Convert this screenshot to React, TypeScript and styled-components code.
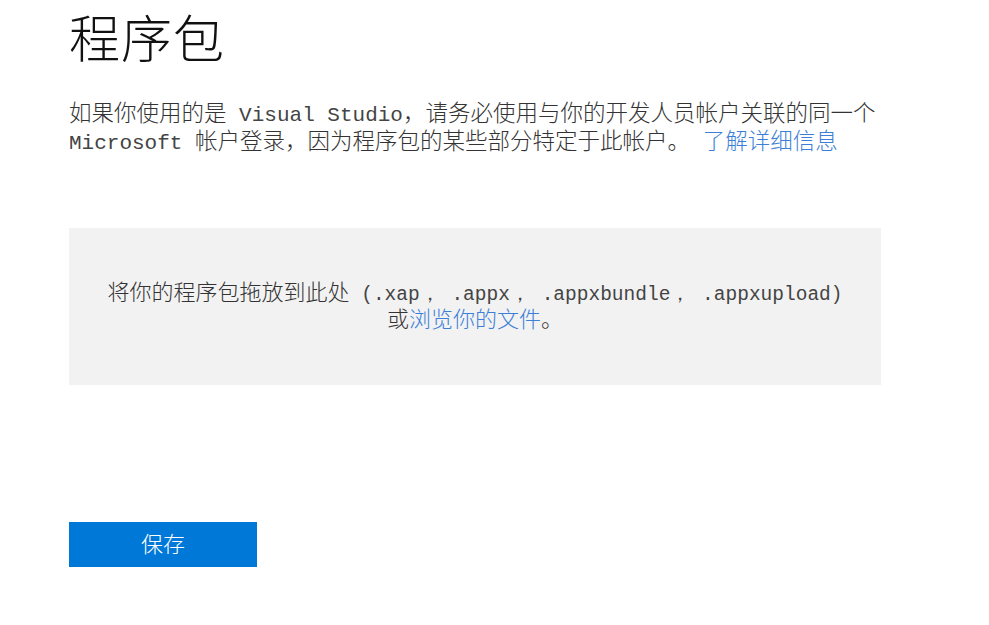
import React from "react";
import styled, { createGlobalStyle } from "styled-components";

const Global = createGlobalStyle`
  html, body { margin: 0; padding: 0; background: #ffffff; }
  body { font-family: "Noto Sans CJK SC", "Noto Sans", sans-serif; color: #2b2b2b; }
`;

const Page = styled.main`
  display: flex;
  flex-direction: column;
  align-items: flex-start;
  padding: 6px 0 0 69px;
`;

const Title = styled.h1`
  margin: 0;
  font-family: "Noto Sans CJK SC", sans-serif;
  font-weight: 300;
  font-size: 51px;
  line-height: 60px;
  color: #111;
  letter-spacing: 1px;
`;

const Intro = styled.p`
  margin: 32px 0 0 0;
  font-size: 22.5px;
  line-height: 27px;
  height: 54px;
  color: #333;
  white-space: nowrap;
  font-weight: 300;
`;

const Latin = styled.span`
  font-family: "Liberation Mono", monospace;
  font-size: 21px;
  line-height: 1;
  color: #444;
`;

const Link = styled.a`
  color: #3d7fd8;
  text-decoration: none;
  cursor: pointer;
`;

const DropZone = styled.section`
  margin-top: 76px;
  width: 812px;
  height: 157px;
  box-sizing: border-box;
  padding-bottom: 6px;
  background: #f2f2f2;
  display: flex;
  flex-direction: column;
  align-items: center;
  justify-content: center;
  font-size: 22px;
  color: #333;
  font-weight: 300;
  white-space: nowrap;
`;

const DropLine = styled.div`
  height: 27px;
  line-height: 27px;
`;

const DropLatin = styled.span`
  font-family: "Liberation Mono", monospace;
  font-size: 19.5px;
  line-height: 1;
  color: #444;
`;

const SaveButton = styled.button`
  margin-top: 137px;
  width: 188px;
  height: 45px;
  border: none;
  background: #0078d7;
  color: #fff;
  font-family: "Noto Sans CJK SC", sans-serif;
  font-size: 22px;
  line-height: 26px;
  font-weight: 300;
  cursor: pointer;
  padding: 0 0 5px 0;
`;

export default function App() {
  return (
    <>
      <Global />
      <Page>
        <Title>程序包</Title>
        <Intro>
          如果你使用的是<Latin> Visual Studio</Latin>，请务必使用与你的开发人员帐户关联的同一个
          <br />
          <Latin>Microsoft </Latin>帐户登录，因为程序包的某些部分特定于此帐户。<Latin> </Latin>
          <Link>了解详细信息</Link>
        </Intro>
        <DropZone>
          <DropLine>
            将你的程序包拖放到此处<DropLatin> (.xap，</DropLatin><DropLatin> .appx，</DropLatin>
            <DropLatin> .appxbundle，</DropLatin><DropLatin> .appxupload)</DropLatin>
          </DropLine>
          <DropLine>
            或<Link>浏览你的文件</Link>。
          </DropLine>
        </DropZone>
        <SaveButton>保存</SaveButton>
      </Page>
    </>
  );
}
